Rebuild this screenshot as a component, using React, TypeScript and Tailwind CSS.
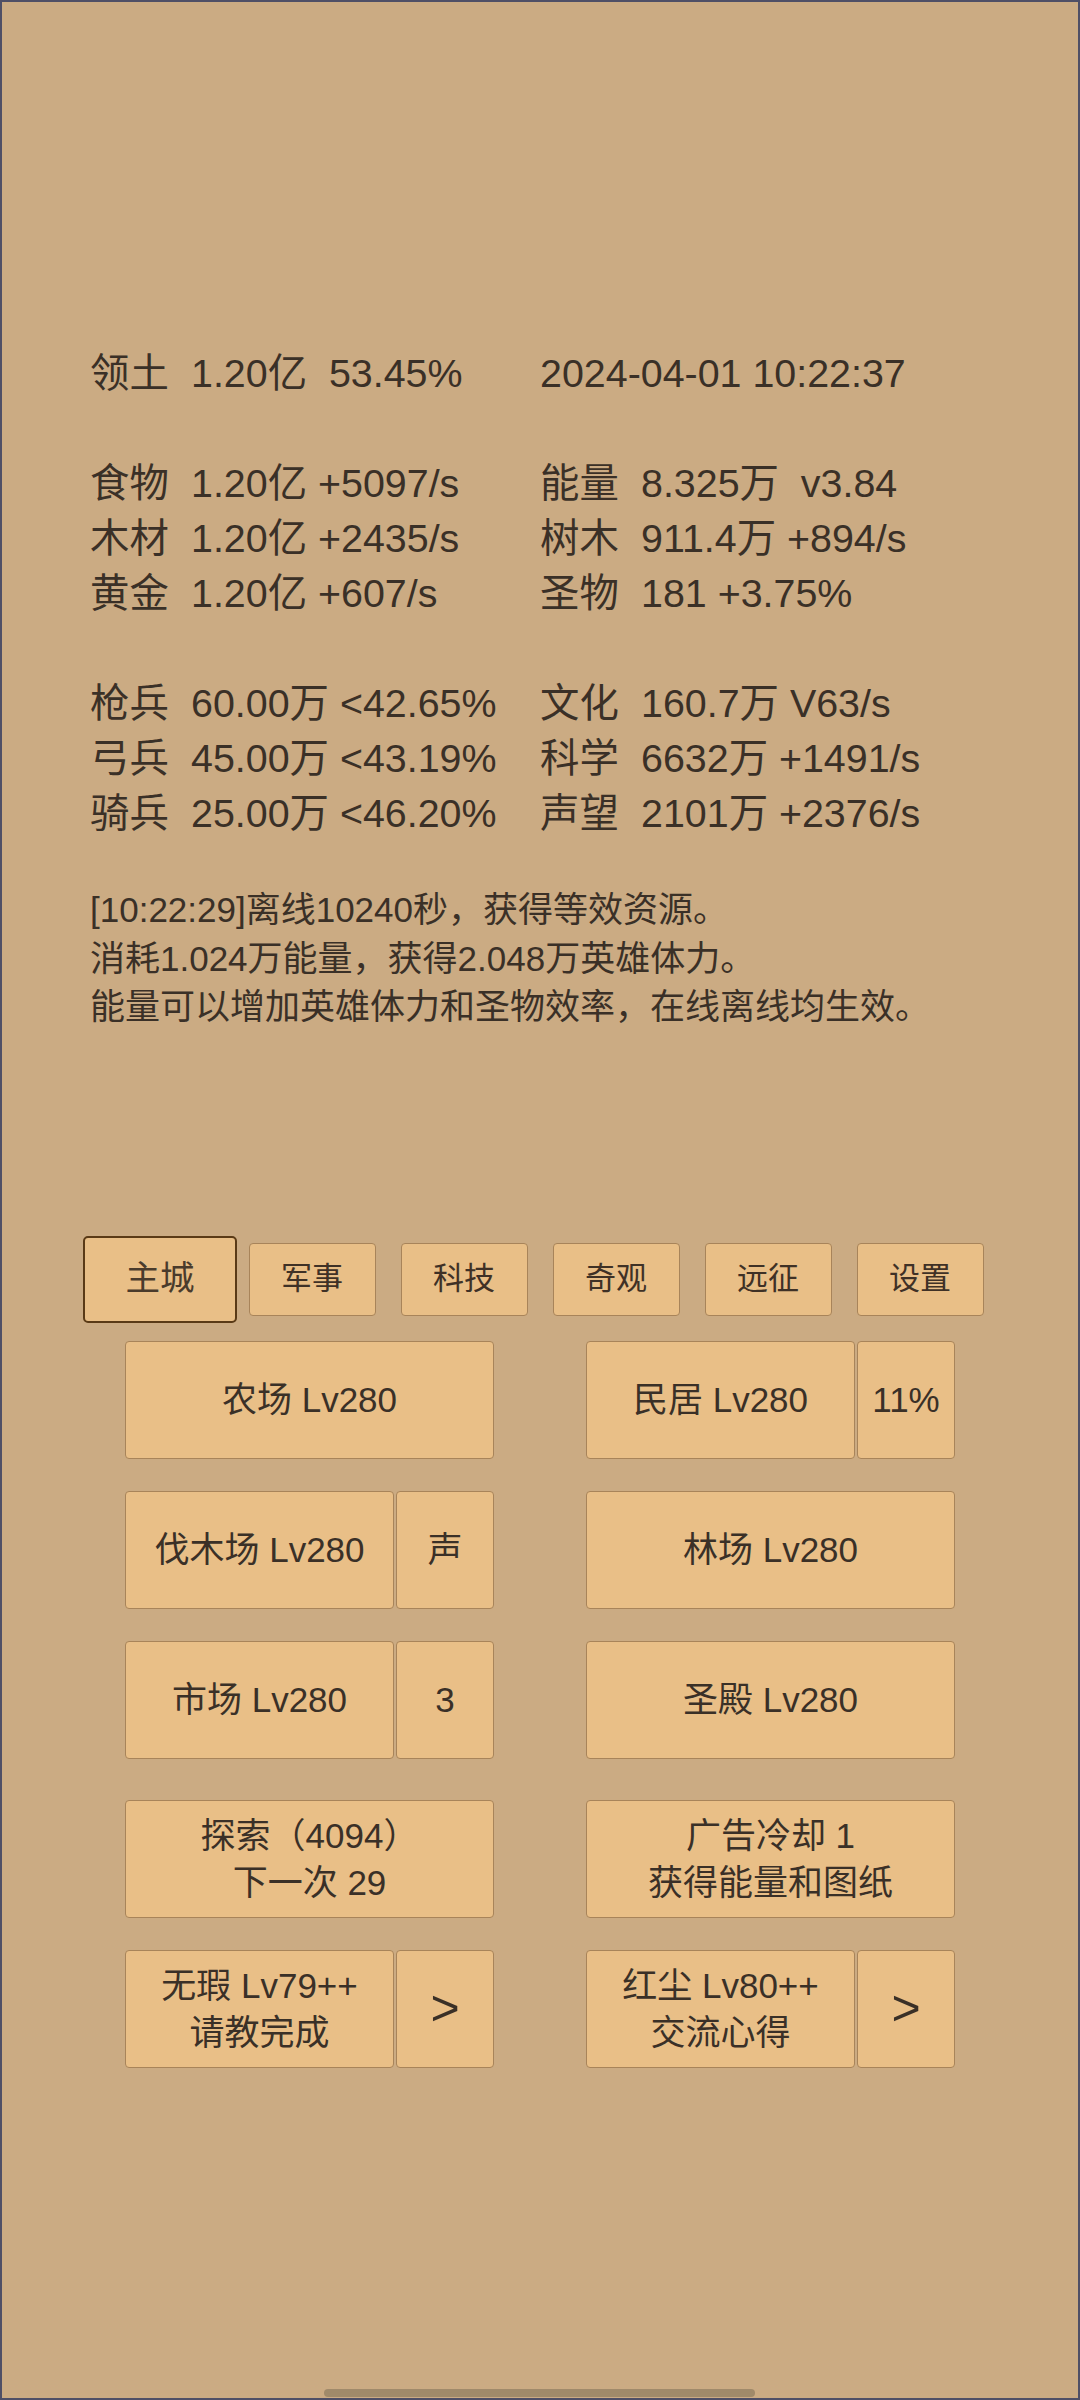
const font = "font-['Liberation_Sans','Noto_Sans_CJK_SC',sans-serif]";

type Stat = { label?: string; value: string } | null;

const stats: [Stat, Stat][] = [
  [{ label: "领土", value: "1.20亿  53.45%" }, { value: "2024-04-01 10:22:37" }],
  [null, null],
  [{ label: "食物", value: "1.20亿 +5097/s" }, { label: "能量", value: "8.325万  v3.84" }],
  [{ label: "木材", value: "1.20亿 +2435/s" }, { label: "树木", value: "911.4万 +894/s" }],
  [{ label: "黄金", value: "1.20亿 +607/s" }, { label: "圣物", value: "181 +3.75%" }],
  [null, null],
  [{ label: "枪兵", value: "60.00万 <42.65%" }, { label: "文化", value: "160.7万 V63/s" }],
  [{ label: "弓兵", value: "45.00万 <43.19%" }, { label: "科学", value: "6632万 +1491/s" }],
  [{ label: "骑兵", value: "25.00万 <46.20%" }, { label: "声望", value: "2101万 +2376/s" }],
];

const tabs = ["主城", "军事", "科技", "奇观", "远征", "设置"];

function Cell({ stat }: { stat: Stat }) {
  if (!stat) return <div className="w-[450px]" />;
  return (
    <div className="flex w-[450px] whitespace-pre">
      {stat.label ? <span className="w-[101px]">{stat.label}</span> : null}
      <span>{stat.value}</span>
    </div>
  );
}

function Btn({
  children,
  className = "",
}: {
  children: React.ReactNode;
  className?: string;
}) {
  return (
    <div
      className={
        "flex h-[118px] flex-col items-center justify-center rounded-[4px] border border-[#a8845a] bg-[#e9bf87] text-center text-[35px] leading-[47px] text-[#3a3027] " +
        className
      }
    >
      {children}
    </div>
  );
}

function Split({ main, side, sideBig }: { main: React.ReactNode; side: string; sideBig?: boolean }) {
  return (
    <div className="flex w-[369px] gap-[2px]">
      <Btn className="w-[269px]">{main}</Btn>
      <Btn className={"w-[98px] " + (sideBig ? "text-[50px]" : "")}>{side}</Btn>
    </div>
  );
}

export default function App() {
  return (
    <div
      className={
        "relative h-[2400px] w-[1080px] overflow-hidden border-2 border-[#4f4f66] bg-[#cbab83] text-[#3a3027] " +
        font
      }
    >
      {/* stats */}
      <div className="pl-[88px] pt-[344px] text-[39.4px]">
        {stats.map((row, i) => (
          <div key={i} className="flex h-[55px] items-center">
            <Cell stat={row[0]} />
            <Cell stat={row[1]} />
          </div>
        ))}
      </div>

      {/* log */}
      <div className="mt-[45px] pl-[88px] text-[35px]">
        <div className="flex h-[48.5px] items-center">[10:22:29]离线10240秒，获得等效资源。</div>
        <div className="flex h-[48.5px] items-center">消耗1.024万能量，获得2.048万英雄体力。</div>
        <div className="flex h-[48.5px] items-center">能量可以增加英雄体力和圣物效率，在线离线均生效。</div>
      </div>

      {/* tabs */}
      <div className="mt-[211px] flex justify-center gap-[25px]">
        {tabs.map((t, i) => (
          <div key={t} className="flex h-[73px] w-[127px] items-center justify-center">
            {i === 0 ? (
              <div className="flex h-[87px] w-[154px] shrink-0 items-center justify-center rounded-[5px] border-2 border-[#5a3a16] bg-[#e9bf87] text-[34.5px] text-[#4a3b2c]">
                {t}
              </div>
            ) : (
              <div className="flex h-[73px] w-[127px] shrink-0 items-center justify-center rounded-[4px] border border-[#a8845a] bg-[#e9bf87] text-[31px] text-[#3f3126]">
                {t}
              </div>
            )}
          </div>
        ))}
      </div>

      {/* buildings */}
      <div className="mt-[25px] flex justify-center gap-[92px]">
        <Btn className="w-[369px]">农场 Lv280</Btn>
        <Split main="民居 Lv280" side="11%" />
      </div>
      <div className="mt-[32px] flex justify-center gap-[92px]">
        <Split main="伐木场 Lv280" side="声" />
        <Btn className="w-[369px]">林场 Lv280</Btn>
      </div>
      <div className="mt-[32px] flex justify-center gap-[92px]">
        <Split main="市场 Lv280" side="3" />
        <Btn className="w-[369px]">圣殿 Lv280</Btn>
      </div>
      <div className="mt-[41px] flex justify-center gap-[92px]">
        <Btn className="w-[369px]">
          <div>探索（4094）</div>
          <div>下一次 29</div>
        </Btn>
        <Btn className="w-[369px]">
          <div>广告冷却 1</div>
          <div>获得能量和图纸</div>
        </Btn>
      </div>
      <div className="mt-[32px] flex justify-center gap-[92px]">
        <Split
          main={
            <>
              <div>无瑕 Lv79++</div>
              <div>请教完成</div>
            </>
          }
          side=">"
          sideBig
        />
        <Split
          main={
            <>
              <div>红尘 Lv80++</div>
              <div>交流心得</div>
            </>
          }
          side=">"
          sideBig
        />
      </div>

      {/* system gesture bar */}
      <div className="absolute bottom-[1px] left-[322px] h-[8px] w-[431px] rounded-full bg-[#a08a6a]" />
    </div>
  );
}
